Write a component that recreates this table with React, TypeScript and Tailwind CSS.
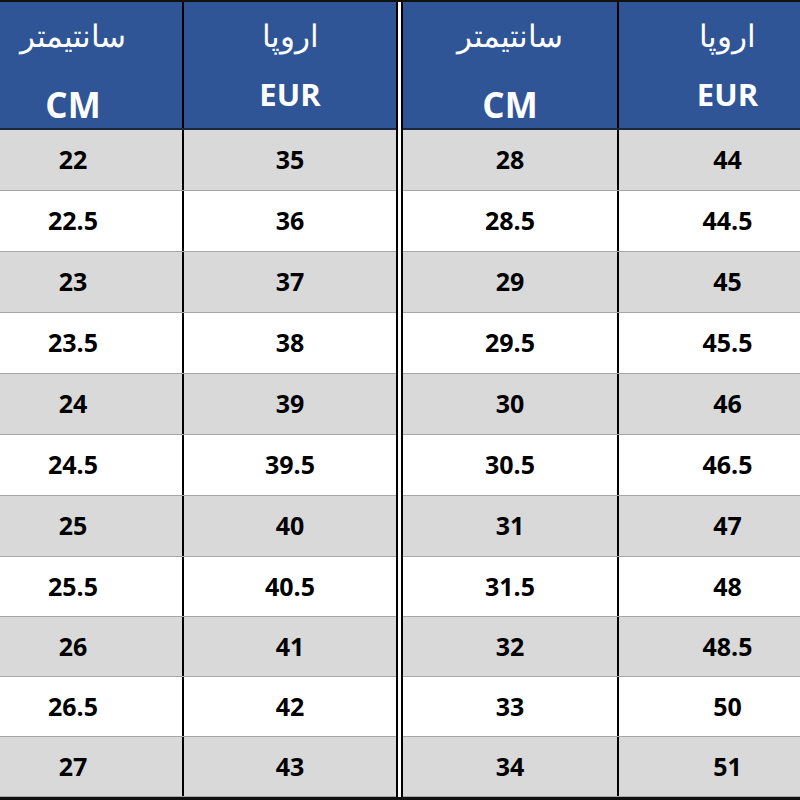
import React from "react";

const left = [
  ["22", "35"],
  ["22.5", "36"],
  ["23", "37"],
  ["23.5", "38"],
  ["24", "39"],
  ["24.5", "39.5"],
  ["25", "40"],
  ["25.5", "40.5"],
  ["26", "41"],
  ["26.5", "42"],
  ["27", "43"],
];
const right = [
  ["28", "44"],
  ["28.5", "44.5"],
  ["29", "45"],
  ["29.5", "45.5"],
  ["30", "46"],
  ["30.5", "46.5"],
  ["31", "47"],
  ["31.5", "48"],
  ["32", "48.5"],
  ["33", "50"],
  ["34", "51"],
];

const heights = ["h-[61px]", "h-[61px]", "h-[61px]", "h-[61px]", "h-[61px]", "h-[61px]", "h-[61px]", "h-[60px]", "h-[60px]", "h-[60px]", "h-[60px]"];

function HeaderCell({ w, border, arabic, latin, cm, pad }: { w: string; border: boolean; arabic: string; latin: string; cm: boolean; pad: string }) {
  return (
    <div className={`${w} ${pad} h-full flex flex-col items-center ${border ? "border-r-2 border-black" : ""}`}>
      <div
        dir="rtl"
        className="mt-[9px] h-[50px] flex items-center justify-center text-white text-[31px] leading-none"
        style={{ fontFamily: '"Liberation Serif", "DejaVu Serif", serif' }}
      >
        {arabic}
      </div>
      <div
        className={`${cm ? "mt-[23px] text-[35px]" : "mt-[13px] text-[31px]"} h-[40px] flex items-center justify-center text-white font-bold leading-none`}
      >
        {latin}
      </div>
    </div>
  );
}

function Half({ data, w1, w2, side }: { data: string[][]; w1: string; w2: string; side: "l" | "r" }) {
  const p1 = side === "l" ? "pr-[36px]" : "";
  const p2 = side === "r" ? "pl-[36px]" : "";
  return (
    <div className={`flex flex-col h-full ${side === "l" ? "w-[398px] border-r-2" : "w-[399px] border-l-2"} border-black`}>
      <div className="h-[126px] flex bg-[#2F5597] border-b-2 border-[#1b2740] box-content">
        <HeaderCell w={w1} pad={p1} border arabic="سانتیمتر" latin="CM" cm />
        <HeaderCell w={w2} pad={p2} border={false} arabic="اروپا" latin="EUR" cm={false} />
      </div>
      {data.map((r, i) => (
        <div
          key={i}
          className={`${heights[i]} flex border-b border-[#a6a6a6] ${i % 2 === 0 ? "bg-[#D9D9D9]" : "bg-white"} text-black text-[25px] font-bold`}
        >
          <div className={`${w1} ${p1} h-full flex items-center justify-center border-r-2 border-black`}>{r[0]}</div>
          <div className={`${w2} ${p2} h-full flex items-center justify-center`}>{r[1]}</div>
        </div>
      ))}
    </div>
  );
}

export default function App() {
  return (
    <div
      className="w-[800px] h-[800px] flex justify-between bg-white border-t-2 border-b-[3px] border-[#111] overflow-hidden"
      style={{ fontFamily: '"Open Sans", "Noto Sans", sans-serif' }}
    >
      <Half data={left} w1="w-[184px]" w2="w-[212px]" side="l" />
      <Half data={right} w1="w-[216px]" w2="w-[181px]" side="r" />
    </div>
  );
}
